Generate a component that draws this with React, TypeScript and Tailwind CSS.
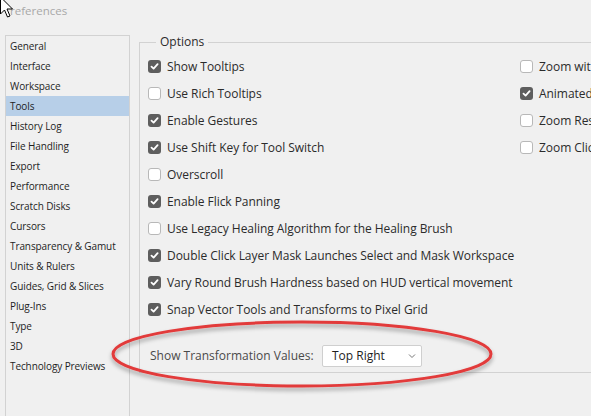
import React from "react";

const navItems = [
  "General",
  "Interface",
  "Workspace",
  "Tools",
  "History Log",
  "File Handling",
  "Export",
  "Performance",
  "Scratch Disks",
  "Cursors",
  "Transparency & Gamut",
  "Units & Rulers",
  "Guides, Grid & Slices",
  "Plug-Ins",
  "Type",
  "3D",
  "Technology Previews",
];

const leftOpts: [string, boolean][] = [
  ["Show Tooltips", true],
  ["Use Rich Tooltips", false],
  ["Enable Gestures", true],
  ["Use Shift Key for Tool Switch", true],
  ["Overscroll", false],
  ["Enable Flick Panning", true],
  ["Use Legacy Healing Algorithm for the Healing Brush", false],
  ["Double Click Layer Mask Launches Select and Mask Workspace", true],
  ["Vary Round Brush Hardness based on HUD vertical movement", true],
  ["Snap Vector Tools and Transforms to Pixel Grid", true],
];

const rightOpts: [string, boolean][] = [
  ["Zoom with Scroll Wheel", false],
  ["Animated Zoom", true],
  ["Zoom Resizes Windows", false],
  ["Zoom Clicked Point to Center", false],
];

function Box({ checked }: { checked: boolean }) {
  if (checked) {
    return (
      <span className="w-[13px] h-[13px] shrink-0 rounded-[3px] bg-[#5e5e5e] flex items-center justify-center">
        <svg width="9" height="9" viewBox="0 0 9 9">
          <path d="M1.5 4.6 L3.6 6.6 L7.6 2.2" fill="none" stroke="#ffffff" strokeWidth="1.8" strokeLinecap="round" strokeLinejoin="round" />
        </svg>
      </span>
    );
  }
  return <span className="w-[13px] h-[13px] shrink-0 rounded-[3px] bg-white border border-[#b8b8b8]" />;
}

function Row({ label, checked }: { label: string; checked: boolean }) {
  return (
    <div className="h-[27px] flex items-center gap-[6px] whitespace-nowrap">
      <Box checked={checked} />
      <span className="text-[12px] text-[#2b2b2b] tracking-[-0.05px]">{label}</span>
    </div>
  );
}

export default function App() {
  return (
    <div
      className="w-[591px] h-[416px] bg-[#f0f0f0] relative overflow-hidden"
      style={{ fontFamily: '"Open Sans", "Noto Sans", sans-serif' }}
    >
      <div className="h-[35px] pl-[10px] pt-[1px] text-[11.5px] text-[#a8a8a8] leading-[20px]">references</div>
      <div className="flex items-start">
        <div className="ml-[5px] w-[125px] h-[400px] border border-[#d2d2d2] shrink-0">
          {navItems.map((n) => (
            <div
              key={n}
              className={
                "h-[20px] pl-[4px] flex items-center text-[10px] text-[#1e1e1e] whitespace-nowrap tracking-[-0.1px] " +
                (n === "Tools" ? "bg-[#b7cfe8]" : "")
              }
            >
              {n}
            </div>
          ))}
        </div>
        <div className="ml-[9px] mt-[7px] w-[600px] h-[331px] border-t border-l border-b border-[#d2d2d2] relative shrink-0">
          <span className="absolute -top-[10px] left-[16px] px-[4px] bg-[#f0f0f0] text-[12px] text-[#2b2b2b] leading-[18px]">
            Options
          </span>
          <div className="pt-[10px] pl-[8px] flex">
            <div className="w-[372px] shrink-0">
              {leftOpts.map(([l, c]) => (
                <Row key={l} label={l} checked={c} />
              ))}
            </div>
            <div className="shrink-0">
              {rightOpts.map(([l, c]) => (
                <Row key={l} label={l} checked={c} />
              ))}
            </div>
          </div>
          <div className="mt-[22px] pl-[10px] flex items-center">
            <span className="text-[12px] text-[#4a4a4a] w-[172px] shrink-0">Show Transformation Values:</span>
            <div className="w-[100px] h-[22px] shrink-0 bg-white border border-[#cfcfcf] rounded-[2px] flex items-center pl-[9px] pr-[5px] justify-between">
              <span className="text-[12px] text-[#1e1e1e]">Top Right</span>
              <svg width="8" height="6" viewBox="0 0 8 6">
                <path d="M1 1.5 L4 4.5 L7 1.5" fill="none" stroke="#777" strokeWidth="1" />
              </svg>
            </div>
          </div>
        </div>
      </div>

      <svg className="absolute inset-0 pointer-events-none" width="591" height="416" viewBox="0 0 591 416">
        <defs>
          <filter id="sh" x="-10%" y="-30%" width="120%" height="160%">
            <feDropShadow dx="0" dy="3" stdDeviation="2" floodColor="#000" floodOpacity="0.35" />
          </filter>
        </defs>
        <ellipse cx="302" cy="354" rx="189" ry="32" fill="none" stroke="#e23b3b" strokeWidth="3" filter="url(#sh)" />
      </svg>

      <svg className="absolute left-0 top-0 pointer-events-none" width="16" height="24" viewBox="0 0 16 24">
        <path d="M0.5 -3 L0.5 14 L4.5 10 L7.5 17 L10 16 L7 9 L12.5 9 Z" fill="#fff" stroke="#000" strokeWidth="1" strokeLinejoin="miter" />
      </svg>
    </div>
  );
}
